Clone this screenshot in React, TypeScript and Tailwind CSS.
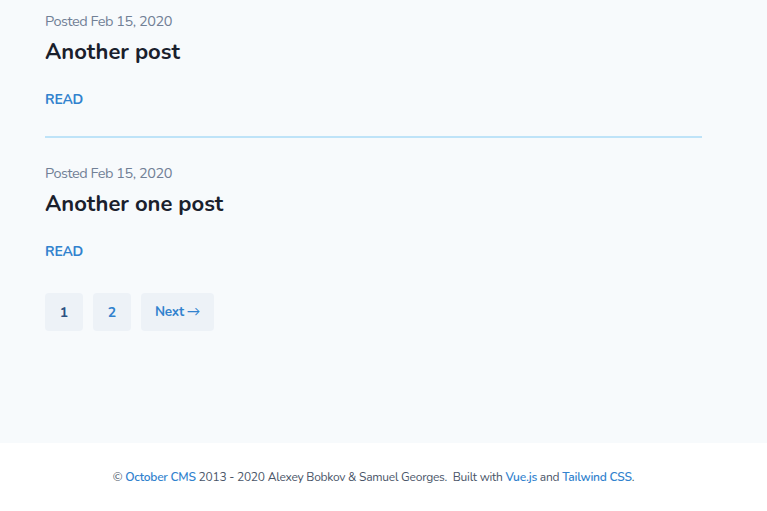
import React from "react";

const font = { fontFamily: "Nunito, Lato, 'Noto Sans', sans-serif" };

function Post({ title, last }: { title: string; last?: boolean }) {
  return (
    <article className={last ? "pt-[23px]" : "pt-[23px] pb-[26px] border-b-2 border-[#bee3f8]"}>
      <div className="text-[14.5px] tracking-[-0.45px] leading-[24px] text-[#718096]">Posted Feb 15, 2020</div>
      <h2 className="mt-[4px] text-[22px] leading-[30px] font-bold text-[#1a202c]">{title}</h2>
      <a className="mt-[23px] block text-[14px] tracking-[-0.2px] leading-[20px] font-bold text-[#3182ce]">READ</a>
    </article>
  );
}

export default function App() {
  return (
    <div className="min-h-[511px] bg-[#f7fafc] flex flex-col" style={font}>
      <main className="flex-1 ml-[45px] w-[657px] mt-[-14px]">
        <Post title="Another post" />
        <Post title="Another one post" last />
        <nav className="mt-[31px] flex gap-[10px] text-[14px] font-bold">
          <span className="w-[38px] h-[38px] flex items-center justify-center rounded bg-[#edf2f7] text-[#2c5282]">1</span>
          <span className="w-[38px] h-[38px] flex items-center justify-center rounded bg-[#edf2f7] text-[#3182ce]">2</span>
          <span className="w-[73px] h-[38px] flex items-center justify-center rounded bg-[#edf2f7] text-[#3182ce] text-[13.5px] tracking-[-0.3px]">
            Next <span className="ml-[3px] font-normal">→</span>
          </span>
        </nav>
      </main>
      <footer className="mt-[112px] bg-white py-6">
        <div className="ml-[45px] w-[657px] text-center text-[12px] tracking-[-0.24px] leading-[20px] text-[#4a5568]">
          © <a className="font-semibold text-[#3182ce]">October CMS</a> 2013 - 2020 Alexey Bobkov &amp; Samuel Georges.&nbsp; Built with{" "}
          <a className="font-semibold text-[#3182ce]">Vue.js</a> and <a className="font-semibold text-[#3182ce]">Tailwind CSS</a>.
        </div>
      </footer>
    </div>
  );
}
